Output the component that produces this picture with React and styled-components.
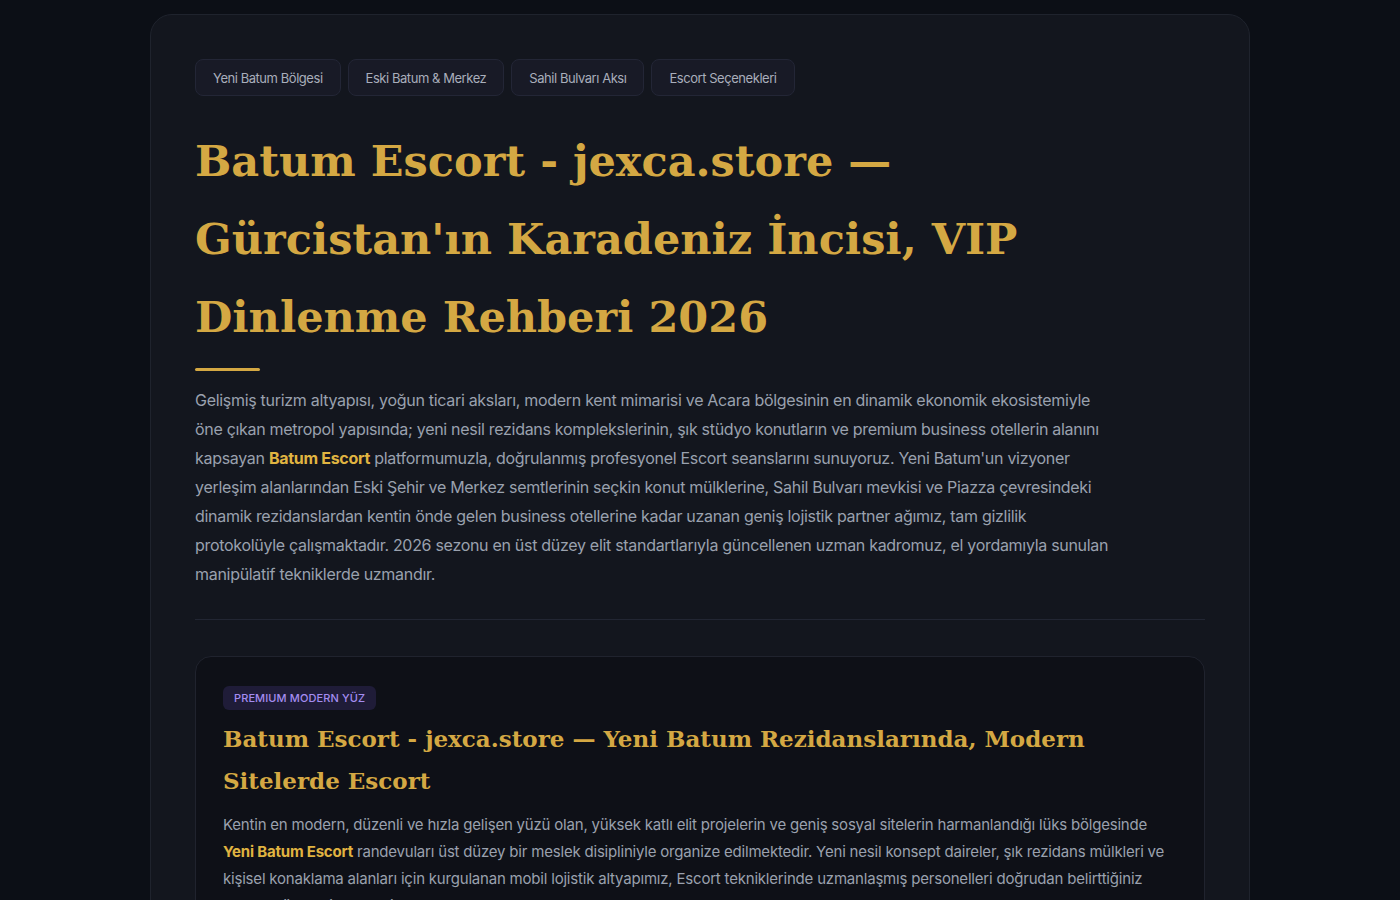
import styled, { createGlobalStyle } from 'styled-components';

const GlobalStyle = createGlobalStyle`
  html, body {
    margin: 0;
    padding: 0;
    background: #0c0f16;
  }
  body {
    font-family: Inter, "Noto Sans", sans-serif;
  }
`;

const Page = styled.div`
  display: flex;
  justify-content: center;
  padding-top: 14px;
  min-height: 900px;
`;

const Article = styled.article`
  width: 1100px;
  box-sizing: border-box;
  padding: 44px 44px 60px 44px;
  background: #13161e;
  border: 1px solid #1f232d;
  border-radius: 22px;
`;

const Tags = styled.nav`
  display: flex;
  gap: 7px;
  margin-bottom: 26px;
`;

const Tag = styled.a`
  display: inline-flex;
  align-items: center;
  height: 37px;
  box-sizing: border-box;
  padding: 0 17px;
  font-size: 13px;
  color: #a9aebb;
  background: #181a26;
  border: 1px solid #232636;
  border-radius: 8px;
  text-decoration: none;
  letter-spacing: -0.45px;
`;

const Title = styled.h1`
  margin: 0;
  max-width: 950px;
  font-family: "DejaVu Serif", serif;
  font-weight: bold;
  font-size: 43px;
  line-height: 78px;
  color: #d4a843;
`;

const Accent = styled.div`
  width: 65px;
  height: 3px;
  background: #d4a843;
  border-radius: 2px;
  margin: 12px 0 15px;
`;

const Lead = styled.p`
  margin: 0;
  max-width: 915px;
  font-size: 16px;
  line-height: 29px;
  color: #9aa1ae;
  letter-spacing: -0.3px;
`;

const Strong = styled.strong`
  color: #e0b441;
  font-weight: 700;
`;

const Divider = styled.hr`
  border: 0;
  border-top: 1px solid #222633;
  margin: 30px 0 36px;
`;

const Section = styled.section`
  background: #0e1017;
  border: 1px solid #20232e;
  border-radius: 16px;
  padding: 29px 27px 40px;
`;

const Badge = styled.span`
  display: inline-block;
  padding: 6px 11px;
  font-size: 11px;
  font-weight: 500;
  line-height: 12px;
  letter-spacing: 0.1px;
  color: #a48cf0;
  background: #1f1c38;
  border-radius: 6px;
  text-transform: uppercase;
`;

const SectionTitle = styled.h2`
  margin: 8px 0 9px;
  font-family: "DejaVu Serif", serif;
  font-weight: bold;
  font-size: 23px;
  line-height: 42px;
  color: #d4a843;
`;

const Body = styled.p`
  margin: 0;
  font-size: 15px;
  line-height: 27px;
  color: #9aa1ae;
  letter-spacing: -0.2px;
`;

const tags = ['Yeni Batum Bölgesi', 'Eski Batum & Merkez', 'Sahil Bulvarı Aksı', 'Escort Seçenekleri'];

export default function App() {
  return (
    <>
      <GlobalStyle />
      <Page>
        <Article>
          <Tags>
            {tags.map((t) => (
              <Tag key={t} href="#">{t}</Tag>
            ))}
          </Tags>
          <Title>
            Batum Escort - jexca.store — Gürcistan'ın Karadeniz İncisi, VIP Dinlenme Rehberi 2026
          </Title>
          <Accent />
          <Lead>
            Gelişmiş turizm altyapısı, yoğun ticari aksları, modern kent mimarisi ve Acara bölgesinin en dinamik ekonomik ekosistemiyle
            öne çıkan metropol yapısında; yeni nesil rezidans komplekslerinin, şık stüdyo konutların ve premium business otellerin alanını
            kapsayan <Strong>Batum Escort</Strong> platformumuzla, doğrulanmış profesyonel Escort seanslarını sunuyoruz. Yeni Batum'un vizyoner
            yerleşim alanlarından Eski Şehir ve Merkez semtlerinin seçkin konut mülklerine, Sahil Bulvarı mevkisi ve Piazza çevresindeki
            dinamik rezidanslardan kentin önde gelen business otellerine kadar uzanan geniş lojistik partner ağımız, tam gizlilik
            protokolüyle çalışmaktadır. 2026 sezonu en üst düzey elit standartlarıyla güncellenen uzman kadromuz, el yordamıyla sunulan
            manipülatif tekniklerde uzmandır.
          </Lead>
          <Divider />
          <Section>
            <Badge>Premium Modern Yüz</Badge>
            <SectionTitle>
              Batum Escort - jexca.store — Yeni Batum Rezidanslarında, Modern Sitelerde Escort
            </SectionTitle>
            <Body>
              Kentin en modern, düzenli ve hızla gelişen yüzü olan, yüksek katlı elit projelerin ve geniş sosyal sitelerin harmanlandığı lüks bölgesinde{' '}
              <Strong>Yeni Batum Escort</Strong> randevuları üst düzey bir meslek disipliniyle organize edilmektedir. Yeni nesil konsept daireler, şık rezidans mülkleri ve
              kişisel konaklama alanları için kurgulanan mobil lojistik altyapımız, Escort tekniklerinde uzmanlaşmış personelleri doğrudan belirttiğiniz
              adrese yönlendirmektedir.
            </Body>
          </Section>
        </Article>
      </Page>
    </>
  );
}
